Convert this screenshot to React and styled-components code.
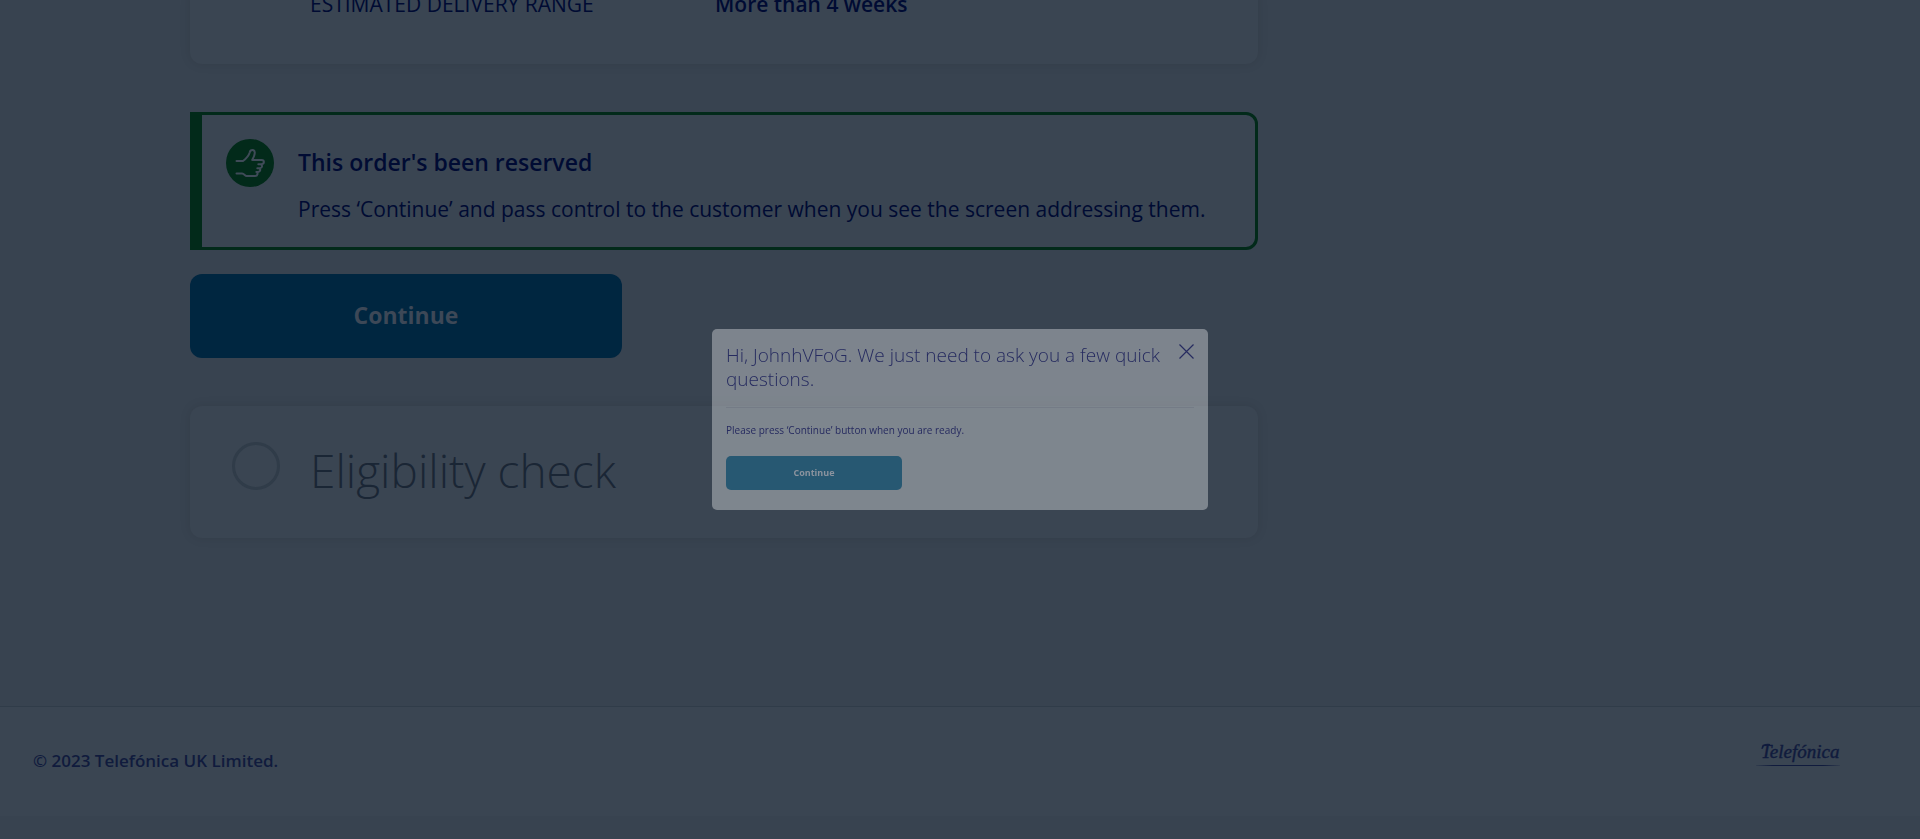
import React from "react";
import styled, { createGlobalStyle } from "styled-components";

const c = {
  page: "#384350",
  surface: "#3a4552",
  line: "#303c49",
  navy: "#000b33",
  footer: "#101b3d",
  muted: "#1a2635",
  green: "#022a1a",
  button: "#002640",
};

const Global = createGlobalStyle`
  * { box-sizing: border-box; }
  body {
    margin: 0;
    background: ${c.page};
    color: ${c.navy};
    font-family: "Open Sans", "Noto Sans", sans-serif;
  }
  h1, h2, h3, p, dl, dt, dd { margin: 0; }
  button { font-family: inherit; border: 0; cursor: pointer; }
`;

const Page = styled.div`
  min-height: 100vh;
  display: flex;
  flex-direction: column;
  overflow: hidden;
`;

const Main = styled.main`
  width: 100%;
  max-width: 1540px;
  margin: 0 auto;
  padding-bottom: 168px;
`;

const Column = styled.div`
  max-width: 1068px;
  display: flex;
  flex-direction: column;
`;

const Card = styled.section`
  background: ${c.surface};
  border-radius: 12px;
  box-shadow: 0 0 12px rgba(0, 0, 0, 0.09);
`;

const SummaryCard = styled(Card)`
  margin-top: -12px;
  padding: 0 24px 44px 120px;
`;

const SummaryRow = styled.dl`
  display: grid;
  grid-template-columns: 405px 1fr;
  font-size: 21px;
  line-height: 32px;
`;

const Term = styled.dt``;

const Value = styled.dd`
  font-weight: 600;
`;

const Notice = styled.section`
  display: flex;
  gap: 24px;
  margin-top: 48px;
  padding: 24px 24px 22px;
  background: ${c.surface};
  border: 3px solid ${c.green};
  border-left-width: 12px;
  border-radius: 0 12px 12px 0;
`;

const NoticeIcon = styled.svg`
  flex: none;
  width: 48px;
  height: 48px;
`;

const NoticeTitle = styled.h2`
  font-size: 23px;
  font-weight: 600;
  line-height: 46px;
`;

const NoticeText = styled.p`
  font-size: 21px;
  line-height: 32px;
  margin-top: 8px;
`;

const PrimaryButton = styled.button`
  width: 432px;
  max-width: 100%;
  height: 84px;
  margin-top: 24px;
  padding: 0 0 2px;
  border-radius: 12px;
  background: ${c.button};
  color: #3d4857;
  font-size: 23px;
  font-weight: 700;
`;

const StepCard = styled(Card)`
  display: flex;
  align-items: flex-start;
  gap: 30px;
  min-height: 132px;
  margin-top: 48px;
  padding: 30px 42px;
`;

const StepMarker = styled.span`
  flex: none;
  width: 48px;
  height: 48px;
  margin-top: 6px;
  border: 3px solid ${c.line};
  border-radius: 50%;
`;

const StepTitle = styled.h2`
  color: ${c.muted};
  font-size: 46px;
  font-weight: 300;
  line-height: 68px;
`;

const Footer = styled.footer`
  display: flex;
  align-items: center;
  justify-content: space-between;
  height: 110px;
  padding: 0 80px 0 33px;
  background: ${c.surface};
  border-top: 1px solid ${c.line};
  color: ${c.footer};
`;

const Copyright = styled.p`
  font-size: 17px;
  font-weight: 600;
  padding-bottom: 2px;
`;

const Logo = styled.svg`
  width: 84px;
  height: 28px;
  margin-bottom: 16px;
`;

const Overlay = styled.div`
  position: fixed;
  inset: 0;
  display: flex;
  align-items: center;
  justify-content: center;
`;

const Dialog = styled.div`
  width: 496px;
  max-width: 100%;
  padding: 14px 14px 20px;
  border-radius: 5px;
  background: rgba(255, 255, 255, 0.35);
  color: #262b60;
`;

const DialogHead = styled.header`
  display: flex;
  align-items: flex-start;
  justify-content: space-between;
  padding-bottom: 16px;
  border-bottom: 1px solid #747b86;
`;

const DialogTitle = styled.h1`
  width: 440px;
  font-size: 19px;
  font-weight: 300;
  line-height: 24px;
`;

const CloseButton = styled.button`
  display: flex;
  padding: 1px 0 0;
  background: none;
  color: inherit;
`;

const DialogText = styled.p`
  margin-top: 14px;
  font-size: 10px;
  line-height: 16px;
`;

const DialogButton = styled.button`
  display: block;
  width: 176px;
  height: 34px;
  margin-top: 18px;
  padding: 0 0 2px;
  border-radius: 5px;
  background: #275872;
  color: #8b939e;
  font-size: 9px;
  font-weight: 700;
`;

function ThumbUp() {
  return (
    <NoticeIcon viewBox="0 0 48 48" aria-hidden="true">
      <circle cx="24" cy="24" r="24" fill={c.green} />
      <path
        d="M10.500 22h6.500c4-3 6-6 6.700-8.500.6-3.200 5-3.500 5.100.2 0 2.500-1.200 4.800-2.600 7.300h9.300c3.200.2 3.200 3.900 0 4.200h-3.200 2c2.500.4 2.300 3.700-.3 4h-2.700 1.500c2.200.5 1.900 3.500-.6 3.700h-1.900c2 .7 1.500 4.100-1.200 4.100H20.500c-1.500 0-2.200-2.200-4.500-2.400h-5.500"
        fill="none"
        stroke="#3f4b58"
        strokeWidth="2"
        strokeLinecap="round"
        strokeLinejoin="round"
      />
    </NoticeIcon>
  );
}

function TelefonicaLogo() {
  return (
    <Logo viewBox="0 0 84 28" role="img" aria-label="Telefónica">
      <defs>
        <linearGradient id="rule" x1="0" x2="1">
          <stop offset="0" stopColor={c.footer} stopOpacity="0.2" />
          <stop offset="0.2" stopColor={c.footer} />
          <stop offset="0.8" stopColor={c.footer} />
          <stop offset="1" stopColor={c.footer} stopOpacity="0.2" />
        </linearGradient>
      </defs>
      <text
        x="5"
        y="18"
        fill={c.footer}
        stroke={c.footer}
        strokeWidth="0.4"
        fontFamily="Liberation Serif, serif"
        fontSize="19"
        fontStyle="italic"
      >
        Telefónica
      </text>
      <path d="M6 9C6 5 9 4 14 4.500" fill="none" stroke={c.footer} strokeWidth="1.200" />
      <rect x="0" y="25" width="84" height="1" fill="url(#rule)" />
    </Logo>
  );
}

export default function App() {
  return (
    <>
      <Global />
      <Page>
        <Main>
          <Column>
            <SummaryCard>
              <SummaryRow>
                <Term>ESTIMATED DELIVERY RANGE</Term>
                <Value>More than 4 weeks</Value>
              </SummaryRow>
            </SummaryCard>
            <Notice>
              <ThumbUp />
              <div>
                <NoticeTitle>This order's been reserved</NoticeTitle>
                <NoticeText>
                  Press ‘Continue’ and pass control to the customer when you see the screen
                  addressing them.
                </NoticeText>
              </div>
            </Notice>
            <PrimaryButton type="button">Continue</PrimaryButton>
            <StepCard>
              <StepMarker />
              <StepTitle>Eligibility check</StepTitle>
            </StepCard>
          </Column>
        </Main>
        <Footer>
          <Copyright>© 2023 Telefónica UK Limited.</Copyright>
          <TelefonicaLogo />
        </Footer>
      </Page>
      <Overlay>
        <Dialog role="dialog" aria-labelledby="dialog-title">
          <DialogHead>
            <DialogTitle id="dialog-title">
              Hi, JohnhVFoG. We just need to ask you a few quick questions.
            </DialogTitle>
            <CloseButton type="button" aria-label="Close">
              <svg width="15" height="15" viewBox="0 0 15 15" aria-hidden="true">
                <path d="M.5.5l14 14M14.500.5l-14 14" stroke="currentColor" strokeWidth="1.200" fill="none" />
              </svg>
            </CloseButton>
          </DialogHead>
          <DialogText>Please press ‘Continue’ button when you are ready.</DialogText>
          <DialogButton type="button">Continue</DialogButton>
        </Dialog>
      </Overlay>
    </>
  );
}
